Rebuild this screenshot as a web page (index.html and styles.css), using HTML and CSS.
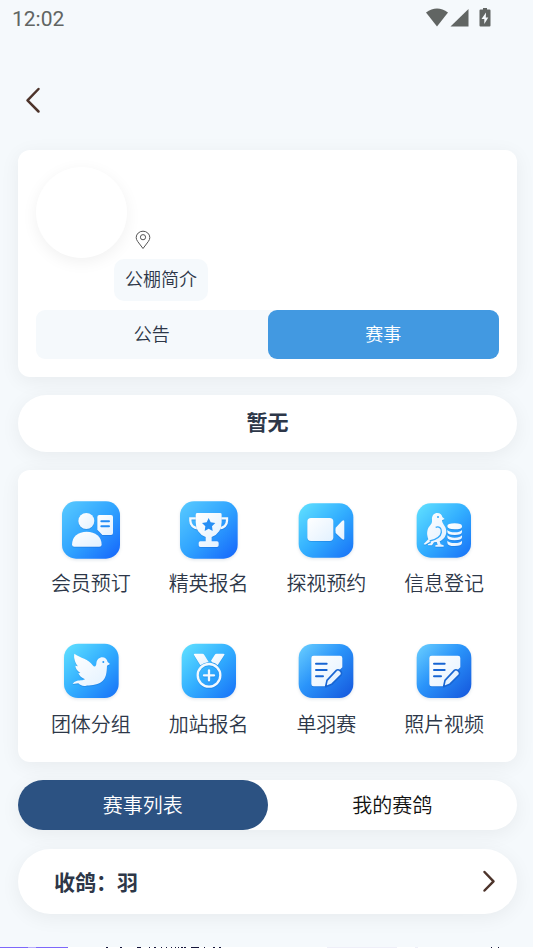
FILE: index.html
```html
<!DOCTYPE html>
<html lang="zh-CN">
<head>
<meta charset="utf-8">
<meta name="viewport" content="width=device-width, initial-scale=1">
<title>公棚</title>
<link rel="stylesheet" href="styles.css">
</head>
<body>
<div class="page">
  <div class="status">
    <span>12:02</span>
    <svg class="status-icons" viewBox="0 0 66 20" aria-hidden="true">
      <path d="M0 4.500Q11-3.500 22 4.500L11 18.500Z"/>
      <path d="M42.500 1V18.500H24.500Z"/>
      <path fill-rule="evenodd" d="M57 0h4v1.500h2.500q1 0 1 1v15q0 1-1 1h-9q-1 0-1-1v-15q0-1 1-1H57zM60 4.500L55.500 11H58.300V16L62.300 9.500H59.800Z"/>
    </svg>
  </div>
  <header class="nav">
    <button class="back" type="button" aria-label="返回">
      <svg viewBox="0 0 16 28" aria-hidden="true"><path d="M13.500 3L2.500 14.300L13.500 25.500"/></svg>
    </button>
  </header>
  <main class="content">
    <section class="card profile">
      <div class="profile-head">
        <div class="avatar"></div>
        <svg class="pin" viewBox="0 0 16 20" aria-hidden="true"><path d="M8 18.500L2.700 11.500Q1.200 9.500 1.200 7.500A6.800 6.300 0 0 1 14.800 7.500Q14.800 9.500 13.300 11.500Z"/><circle cx="8" cy="7.200" r="2.600"/></svg>
      </div>
      <button class="intro" type="button">公棚简介</button>
      <div class="tabs">
        <button class="tab" type="button">公告</button>
        <button class="tab tab-on" type="button">赛事</button>
      </div>
    </section>

    <section class="card notice">暂无</section>

    <nav class="card grid">
      <a class="item" href="#">
        <svg class="icon" viewBox="18 15 210 210" aria-hidden="true">
          <defs>
            <linearGradient id="sky" x1="0" y1="0" x2="1" y2="1"><stop offset="0" stop-color="#59cbff"/><stop offset=".5" stop-color="#30a4ff"/><stop offset="1" stop-color="#1464fb"/></linearGradient>
            <linearGradient id="aqua" x1="0" y1="0" x2="1" y2="1"><stop offset="0" stop-color="#62e2ff"/><stop offset=".5" stop-color="#32aeff"/><stop offset="1" stop-color="#1770f7"/></linearGradient>
            <linearGradient id="deep" x1="0" y1="0" x2="1" y2="1"><stop offset="0" stop-color="#6bd0ff"/><stop offset=".45" stop-color="#2a94fa"/><stop offset="1" stop-color="#1455dc"/></linearGradient>
            <linearGradient id="pearl" x1="0" y1="0" x2="1" y2="1"><stop offset="0" stop-color="#fff"/><stop offset="1" stop-color="#e2f1ff"/></linearGradient>
          </defs>
          <rect class="tile" x="36" y="34" width="174" height="172" rx="42" fill="url(#sky)"/>
          <g class="shape">
            <circle cx="109" cy="93" r="24"/>
            <path d="M66 164C66 140 84 125 110 125S155 140 155 164Q155 170 148 170H73Q66 170 66 164Z"/>
            <path d="M148 75H183Q189 75 189 81V129Q189 135 183 135H157L142 119V81Q142 75 148 75Z"/>
          </g>
          <path d="M154 94H177M154 109H177" fill="none" stroke="#238bf5" stroke-width="6" stroke-linecap="round"/>
        </svg>
        <span>会员预订</span>
      </a>
      <a class="item" href="#">
        <svg class="icon" viewBox="372 15 210 210" aria-hidden="true">
          <rect class="tile" x="390" y="34" width="173" height="172" rx="42" fill="url(#sky)"/>
          <path class="line" d="M440 85H421V92Q421 111 446 116M512 85H531V92Q531 111 506 116" stroke-width="7"/>
          <g class="shape">
            <path d="M441 69H511Q516 69 515 75V97Q515 130 485 141V154H501Q506 154 506 159V166Q506 171 501 171H451Q446 171 446 166V159Q446 154 451 154H467V141Q437 130 437 97V75Q437 69 441 69Z"/>
          </g>
          <path d="M476 84L482 97L496 99L486 109L488 123L476 116L464 123L466 109L456 99L470 97Z" fill="#278ff5"/>
        </svg>
        <span>精英报名</span>
      </a>
      <a class="item" href="#">
        <svg class="icon" viewBox="17 15 210 210" aria-hidden="true">
          <rect class="tile" x="40" y="40" width="164" height="163" rx="42" fill="url(#aqua)"/>
          <g class="shape">
            <rect x="66" y="84" width="78" height="69" rx="11"/>
            <path d="M151 113L170 93Q177 87 177 96V144Q177 153 170 147L151 129Q149 121 151 113Z"/>
          </g>
        </svg>
        <span>探视预约</span>
      </a>
      <a class="item" href="#">
        <svg class="icon" viewBox="371 15 210 210" aria-hidden="true">
          <rect class="tile" x="394" y="40" width="163" height="163" rx="42" fill="url(#aqua)"/>
          <g class="shape">
            <path d="M440 90C439 76 446 69 456 69C465 69 470 75 471 81L478 87L470 91C470 102 483 108 483 124C483 139 474 150 463 154L466 163L475 166V170H450V166L457 164L454 156L446 157L440 166H428V163L436 160L437 154L419 164L415 162L429 148C422 130 426 116 433 108C438 102 441 98 440 90Z"/>
            <path d="M486 109V108Q486 100 508 100T530 108V110Q530 118 508 118T486 109ZM486 120Q492 127 508 127T530 120V126Q530 135 508 135T486 126ZM486 136Q492 143 508 143T530 136V142Q530 151 508 151T486 142ZM486 152Q492 159 508 159T530 152V158Q530 168 508 168T486 158Z"/>
          </g>
          <path d="M451 112C461 108 470 115 468 127C466 142 450 149 433 153" fill="none" stroke="#35a9fb" stroke-width="4"/>
          <circle cx="458" cy="81" r="3" fill="#35a9fb"/>
        </svg>
        <span>信息登记</span>
      </a>
      <a class="item" href="#">
        <svg class="icon" viewBox="18 13 210 210" aria-hidden="true">
          <rect class="tile" x="42" y="36" width="164" height="163" rx="42" fill="url(#aqua)"/>
          <g class="shape">
            <path d="M73 66C91 79 116 82 128 101C134 108 139 104 139 95C140 84 148 77 157 77C165 77 171 82 173 91L180 97L171 102C170 121 170 140 153 152C140 162 119 160 106 163C96 164 89 159 85 155L68 157C73 148 85 146 97 146L105 143C95 139 88 132 85 125L91 124C81 117 76 109 76 102L84 104C76 95 70 79 73 66Z"/>
          </g>
          <circle cx="160" cy="91" r="3" fill="#2598fa"/>
        </svg>
        <span>团体分组</span>
      </a>
      <a class="item" href="#">
        <svg class="icon" viewBox="371 13 210 210" aria-hidden="true">
          <rect class="tile" x="394" y="36" width="163" height="163" rx="42" fill="url(#aqua)"/>
          <g class="shape">
            <path d="M434 66H456Q460 66 462 70L475 91Q460 93 450 101L431 70Q429 66 434 66Z"/>
            <path d="M519 66H499Q495 66 493 70L482 87L485 92Q495 94 502 101L522 70Q524 66 519 66Z"/>
          </g>
          <circle class="line" cx="476" cy="131" r="34" stroke-width="7"/>
          <path class="line" d="M461 131H491M476 116V146" stroke-width="7"/>
        </svg>
        <span>加站报名</span>
      </a>
      <a class="item" href="#">
        <svg class="icon" viewBox="17 13 210 210" aria-hidden="true">
          <rect class="tile" x="40" y="37" width="164" height="162" rx="42" fill="url(#deep)"/>
          <path class="shape" d="M85 72H164Q171 72 171 79V107L133 145L124 164H85Q78 164 78 157V79Q78 72 85 72Z"/>
          <path d="M92 96H124M92 115H124M92 134H113" fill="none" stroke="#1765d3" stroke-width="6" stroke-linecap="round"/>
          <path class="pen" d="M121 165L125 146L153 116Q158 112 164 117L167 120Q171 125 167 130L139 158Z"/>
        </svg>
        <span>单羽赛</span>
      </a>
      <a class="item" href="#">
        <svg class="icon" viewBox="17 13 210 210" aria-hidden="true">
          <rect class="tile" x="40" y="37" width="164" height="162" rx="42" fill="url(#deep)"/>
          <path class="shape" d="M85 72H164Q171 72 171 79V107L133 145L124 164H85Q78 164 78 157V79Q78 72 85 72Z"/>
          <path d="M92 96H124M92 115H124M92 134H113" fill="none" stroke="#1765d3" stroke-width="6" stroke-linecap="round"/>
          <path class="pen" d="M121 165L125 146L153 116Q158 112 164 117L167 120Q171 125 167 130L139 158Z"/>
        </svg>
        <span>照片视频</span>
      </a>
    </nav>

    <div class="card switch">
      <button class="option option-on" type="button">赛事列表</button>
      <button class="option" type="button">我的赛鸽</button>
    </div>

    <a class="card row" href="#">
      <span>收鸽：羽</span>
      <svg class="chevron" viewBox="0 0 14 24" aria-hidden="true"><path d="M2.500 3L11.500 12.300L2.500 21.500"/></svg>
    </a>
  </main>
  <div class="strip"><svg viewBox="0 0 533 1" preserveAspectRatio="none" aria-hidden="true">
    <path fill="#7d68fa" d="M0 0H68V1H0Z"/><path fill="#b9adff" d="M28 0H36V1H28Z"/>
    <path fill="#15143a" d="M106 0h2v1h-2zM120 0h2v1h-2zM137 0h4v1h-4zM149 0h1v1h-1zM154 0h2v1h-2zM161 0h1v1h-1zM166 0h1v1h-1zM171 0h1v1h-1zM175 0h1v1h-1zM178 0h1v1h-1zM181 0h2v1h-2zM184 0h2v1h-2zM191 0h8v1h-8zM204 0h1v1h-1zM213 0h2v1h-2zM219 0h2v1h-2zM491 0h1v1h-1zM498 0h1v1h-1z"/>
    <path fill="#efeff8" d="M327 0H397V1H327ZM415 0h3v1h-3z"/>
  </svg></div>
</div>
</body>
</html>
```
FILE: styles.css
```css
* { box-sizing: border-box; }

body {
  margin: 0;
  background: #f5f9fc;
  color: #2d3748;
  font-family: "Noto Sans CJK SC", sans-serif;
  font-size: 20px;
  font-weight: 350;
}

button {
  margin: 0;
  padding: 0;
  border: 0;
  background: none;
  color: inherit;
  font: inherit;
  cursor: pointer;
}

a { color: inherit; text-decoration: none; }
svg { display: block; flex: none; }

.page {
  display: flex;
  flex-direction: column;
  min-height: 100vh;
}

.status {
  display: flex;
  align-items: center;
  justify-content: space-between;
  height: 38px;
  padding: 0 41px 0 12px;
  color: #616563;
  font: 400 21px/24px Roboto, sans-serif;
}

.status-icons {
  width: 66px;
  height: 20px;
  margin-bottom: 2px;
  fill: #616563;
}

.nav {
  display: flex;
  align-items: center;
  height: 98px;
  padding: 26px 17px 0;
}

.back { padding: 8px; }
.back svg { width: 16px; height: 28px; }

.back path,
.chevron path {
  fill: none;
  stroke: #4d342b;
  stroke-width: 2.5;
  stroke-linecap: round;
  stroke-linejoin: round;
}

.content {
  display: flex;
  flex-direction: column;
  gap: 18px;
  padding: 14px 16px 32px 18px;
}

.card {
  border-radius: 12px;
  background: #fff;
  box-shadow: 0 4px 20px rgba(0, 0, 0, 0.06);
}

.profile { padding: 17px 18px 18px; }

.profile-head {
  display: flex;
  align-items: flex-end;
  gap: 8px;
}

.avatar {
  width: 91px;
  height: 91px;
  border-radius: 50%;
  background: #fff;
  box-shadow: 0 4px 16px rgba(0, 0, 0, 0.06);
}

.pin {
  width: 16px;
  height: 20px;
  margin-bottom: 8px;
  fill: none;
  stroke: #555;
  stroke-width: 1;
}

.intro {
  display: block;
  height: 42px;
  margin: 1px 0 9px 78px;
  padding: 0 11px 4px;
  border-radius: 10px;
  background: #f5f9fc;
  font-size: 18px;
}

.tabs {
  display: flex;
  height: 49px;
  border-radius: 9px;
  background: #f5f9fc;
}

.tab {
  flex: 1;
  padding-bottom: 4px;
  border-radius: 9px;
  font-size: 18px;
}

.tab-on { background: #4299e1; color: #fff; }

.notice {
  height: 57px;
  border-radius: 29px;
  font-size: 21px;
  font-weight: 700;
  line-height: 52px;
  text-align: center;
}

.grid {
  display: grid;
  grid-template-columns: repeat(4, 1fr);
  row-gap: 35px;
  padding: 25px 14px 20px;
}

.item {
  display: flex;
  flex-direction: column;
  align-items: center;
  line-height: 36px;
}

.icon { width: 70px; height: 70px; }
.tile { filter: drop-shadow(0 4px 4px rgba(40, 80, 120, 0.15)); }
.shape { fill: url(#pearl); filter: drop-shadow(0 2px 2px rgba(0, 70, 170, 0.3)); }

.line {
  fill: none;
  stroke: #f2f9ff;
  stroke-linecap: round;
  filter: drop-shadow(0 2px 2px rgba(0, 70, 170, 0.3));
}

.pen {
  fill: #e6f3ff;
  stroke: #1765d3;
  stroke-width: 5;
  stroke-linejoin: round;
}

.switch {
  display: flex;
  height: 50px;
  margin-bottom: 1px;
  border-radius: 25px;
}

.option {
  flex: 1;
  padding-bottom: 2px;
  border-radius: 25px;
  color: #111;
}

.option-on { background: #2c5282; color: #fff; }

.row {
  display: flex;
  align-items: center;
  justify-content: space-between;
  height: 65px;
  padding: 0 21px 2px 36px;
  border-radius: 33px;
  font-size: 21px;
  font-weight: 700;
}

.chevron { width: 14px; height: 24px; }

.strip {
  height: 1px;
  margin-top: auto;
  background: #fff;
}

.strip svg { width: 100%; height: 1px; }
```
